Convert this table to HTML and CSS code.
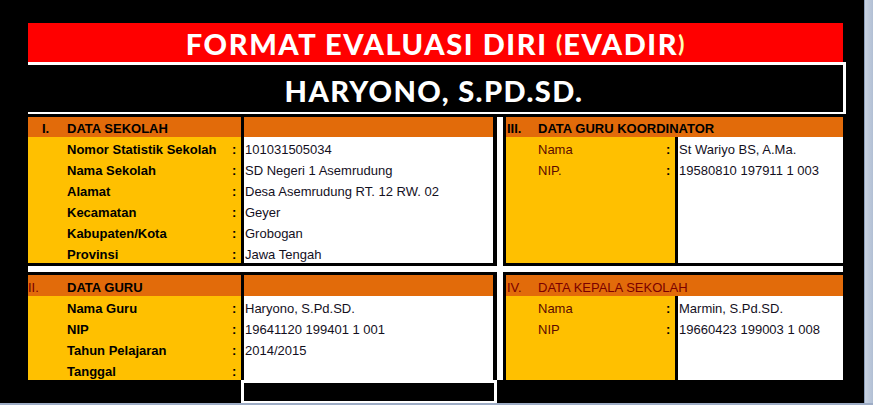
FILE: index.html
```html
<!DOCTYPE html>
<html>
<head>
<meta charset="utf-8">
<link rel="stylesheet" href="styles.css">
</head>
<body>
<div class="screen">
  <div class="sheet">
    <div class="banner">FORMAT EVALUASI DIRI <span class="paren">(</span>EVADIR<span class="paren">)</span></div>
    <div class="rule-a"></div>
    <div class="nameband">HARYONO, S.PD.SD.</div>
    <div class="rule-b"></div>

    <div class="sections">
      <div class="sec tl">
        <div class="head h20">
          <div class="hl wl"><span class="num n1 b">I.</span><span class="b">DATA SEKOLAH</span></div>
          <div class="hdiv"></div>
          <div class="hr"></div>
        </div>
        <div class="body">
          <div class="labels wl">
            <div class="row"><span class="lab b pl39">Nomor Statistik Sekolah</span><span class="colon">:</span></div>
            <div class="row"><span class="lab b pl39">Nama Sekolah</span><span class="colon">:</span></div>
            <div class="row"><span class="lab b pl39">Alamat</span><span class="colon">:</span></div>
            <div class="row"><span class="lab b pl39">Kecamatan</span><span class="colon">:</span></div>
            <div class="row"><span class="lab b pl39">Kabupaten/Kota</span><span class="colon">:</span></div>
            <div class="row"><span class="lab b pl39">Provinsi</span><span class="colon">:</span></div>
          </div>
          <div class="divider"></div>
          <div class="values">
            <div class="row val">101031505034</div>
            <div class="row val">SD Negeri 1 Asemrudung</div>
            <div class="row val">Desa Asemrudung RT. 12 RW. 02</div>
            <div class="row val">Geyer</div>
            <div class="row val">Grobogan</div>
            <div class="row val">Jawa Tengah</div>
          </div>
        </div>
      </div>

      <div class="sec tr">
        <div class="head h20">
          <div class="hfull"><span class="num n3 b">III.</span><span class="b">DATA GURU KOORDINATOR</span></div>
        </div>
        <div class="body">
          <div class="labels wr">
            <div class="row"><span class="lab dred pl32">Nama</span><span class="colon">:</span></div>
            <div class="row"><span class="lab dred pl32">NIP.</span><span class="colon">:</span></div>
          </div>
          <div class="divider"></div>
          <div class="values">
            <div class="row val">St Wariyo BS, A.Ma.</div>
            <div class="row val">19580810 197911 1 003</div>
          </div>
        </div>
      </div>

      <div class="sec bl">
        <div class="head h21">
          <div class="hl wl"><span class="num n2 red">II.</span><span class="b">DATA GURU</span></div>
          <div class="hdiv"></div>
          <div class="hr"></div>
        </div>
        <div class="body">
          <div class="labels wl">
            <div class="row"><span class="lab b pl39">Nama Guru</span><span class="colon">:</span></div>
            <div class="row"><span class="lab b pl39">NIP</span><span class="colon">:</span></div>
            <div class="row"><span class="lab b pl39">Tahun Pelajaran</span><span class="colon">:</span></div>
            <div class="row"><span class="lab b pl39">Tanggal</span><span class="colon">:</span></div>
          </div>
          <div class="divider"></div>
          <div class="values">
            <div class="row val">Haryono, S.Pd.SD.</div>
            <div class="row val">19641120 199401 1 001</div>
            <div class="row val">2014/2015</div>
            <div class="row val"></div>
          </div>
        </div>
      </div>

      <div class="sec br">
        <div class="head h21">
          <div class="hfull"><span class="num n3 red">IV.</span><span class="red">DATA KEPALA SEKOLAH</span></div>
        </div>
        <div class="body">
          <div class="labels wr">
            <div class="row"><span class="lab dred pl32">Nama</span><span class="colon">:</span></div>
            <div class="row"><span class="lab dred pl32">NIP</span><span class="colon">:</span></div>
          </div>
          <div class="divider"></div>
          <div class="values">
            <div class="row val">Marmin, S.Pd.SD.</div>
            <div class="row val">19660423 199003 1 008</div>
          </div>
        </div>
      </div>
    </div>

    <div class="bottom"><div class="box"></div></div>
  </div>
  <div class="vscroll"></div>
</div>
<div class="hscroll"></div>
</body>
</html>
```

FILE: styles.css
```css
* { box-sizing: border-box; margin: 0; padding: 0; }
html, body { width: 873px; height: 405px; overflow: hidden; background: #000; }
body { font-family: "Liberation Sans", Arial, sans-serif; font-size: 13px; color: #000; }

.screen { display: flex; height: 403px; }
.sheet { width: 864px; padding: 23px 0 0 28px; }
.vscroll {
  width: 9px;
  background: linear-gradient(to right, #8d9fba 0, #8d9fba 1px, #c9d3e2 1px, #b1bfd4 100%);
}
.hscroll { height: 2px; background: #9dacc5; }

.banner {
  width: 815px; height: 39px; background: #ff0000; color: #fff;
  display: flex; align-items: center; justify-content: center;
  font-family: Lato, "DejaVu Sans", sans-serif; font-weight: 900; font-size: 29px;
  letter-spacing: 1.6px; padding-top: 2px; white-space: pre;
}
.paren { color: #ffffb4; font-size: 22px; letter-spacing: 1px; }
.rule-a { width: 818px; height: 3px; background: #fff; }
.nameband {
  width: 818px; height: 47px; border-right: 3px solid #fff;
  display: flex; align-items: center; justify-content: center; padding-top: 3px; padding-right: 3px;
  color: #fff; font-family: Lato, "DejaVu Sans", sans-serif; font-weight: 900; font-size: 29px;
  letter-spacing: 1.4px;
}
.rule-b { width: 818px; height: 2px; background: #fff; margin-bottom: 3px; }

.sections {
  display: grid; width: 815px;
  grid-template-columns: 469px 340px;
  grid-template-rows: 149px 108px;
  gap: 6px; background: #fff;
}
.sec { display: flex; flex-direction: column; background: #000; }
.tl { border-right: 4px solid #000; border-bottom: 3px solid #000; }
.tr { border-left: 3px solid #000; border-bottom: 3px solid #000; }
.bl { border-top: 3px solid #000; border-right: 4px solid #000; }
.br { border-top: 3px solid #000; border-left: 3px solid #000; }

.head { display: flex; background: #e26b0a; white-space: nowrap; }
.h20 { height: 20px; padding-top: 3px; line-height: 17px; }
.h21 { height: 21px; padding-top: 4px; line-height: 17px; }
.hl { display: flex; }
.hdiv { width: 3px; background: #000; margin-top: -4px; }
.h20 .hdiv { margin-top: -3px; }
.hr { flex: 1; }
.hfull { display: flex; flex: 1; }

.num { display: inline-block; }
.n1 { width: 39px; padding-left: 14px; }
.n2 { width: 39px; }
.n3 { width: 32px; padding-left: 1px; }

.body { flex: 1; display: flex; }
.labels { background: #ffc000; }
.wl { width: 213px; }
.wr { width: 169px; }
.divider { width: 3px; background: #000; }
.values { flex: 1; background: #fff; }

.row { height: 21px; padding-top: 4px; line-height: 17px; display: flex; white-space: nowrap; }
.lab { flex: 1; }
.pl39 { padding-left: 39px; }
.pl32 { padding-left: 32px; }
.colon { width: 9px; font-weight: bold; }
.val { padding-left: 1px; color: #14101e; }

.b { font-weight: bold; }
.red { color: #7a0000; }
.dred { color: #5c0a00; }

.bottom { height: 23px; padding-left: 213px; }
.box { width: 256px; height: 23px; border: 3px solid #fff; border-bottom-width: 2px; background: #000; }
```
